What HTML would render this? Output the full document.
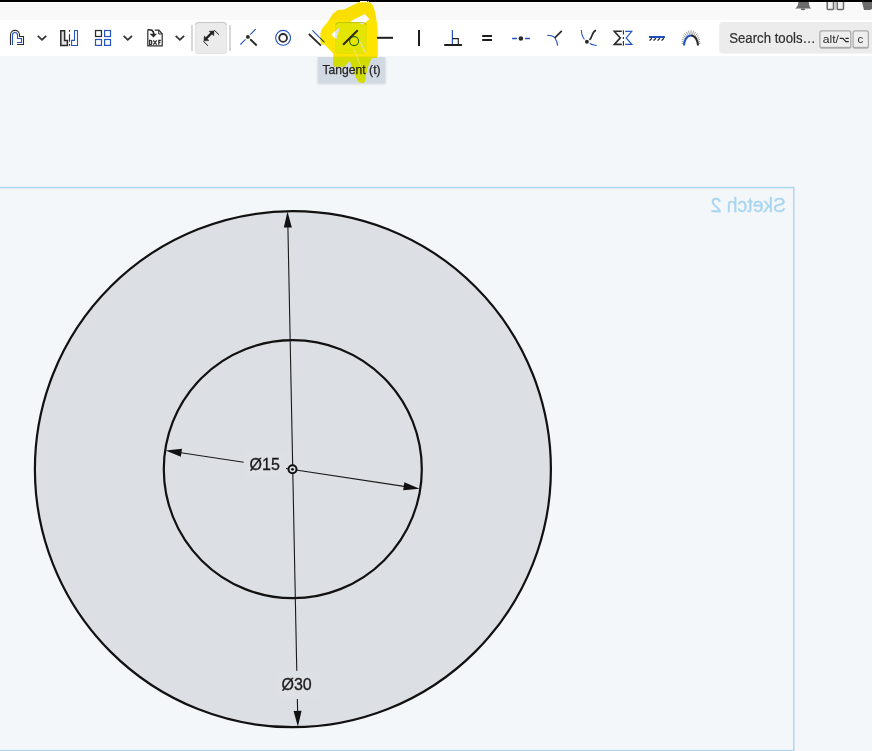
<!DOCTYPE html>
<html><head><meta charset="utf-8">
<style>
html,body{margin:0;padding:0;}
body{width:872px;height:751px;overflow:hidden;position:relative;background:#f3f7fa;font-family:"Liberation Sans",sans-serif;}
.abs{position:absolute;left:0;width:872px;}
svg{position:absolute;left:0;top:0;}
</style></head><body>
<div class="abs" style="top:0;height:2px;background:#000"></div>
<div class="abs" style="top:2px;height:1px;background:#fff"></div>
<div class="abs" style="top:3px;height:17px;background:#f9f9f9"></div>
<div class="abs" style="top:20px;height:36px;background:#fff"></div>
<svg width="872" height="751" viewBox="0 0 872 751" font-family="Liberation Sans, sans-serif" style="will-change:transform">
<!-- ===== CANVAS ===== -->
<g id="canvas">
  <!-- sketch plane rect -->
  <rect x="-10" y="187.6" width="803.8" height="563" fill="none" stroke="#f6f7f9" stroke-width="3.6"/>
  <rect x="-10" y="187.6" width="803.8" height="563" fill="none" stroke="#acd7f1" stroke-width="1.5"/>
  <text x="0" y="0" transform="translate(786,211.5) scale(-1,1)" font-size="19.5" fill="#a9d5f0" stroke="#a9d5f0" stroke-width="0.35" textLength="75.3" lengthAdjust="spacingAndGlyphs">Sketch 2</text>
  <!-- outer disk -->
  <circle cx="292.9" cy="469.2" r="258" fill="#dcdfe4" stroke="#111" stroke-width="2.2"/>
  <circle cx="292.8" cy="469.2" r="129" fill="none" stroke="#111" stroke-width="2.2"/>
  <!-- label boxes -->
  <rect x="244" y="451" width="42" height="27.5" fill="#dde0e4"/>
  <rect x="276" y="671" width="43" height="27.7" fill="#dde0e4"/>
  <!-- dim lines -->
  <g stroke="#1a1a1a" stroke-width="1.1" fill="none">
    <line x1="287.8" y1="222" x2="296.77" y2="670.8"/>
    <line x1="297.34" y1="699" x2="297.7" y2="716"/>
    <line x1="176" y1="452" x2="243.7" y2="462.18"/>
    <line x1="286" y1="468.56" x2="409" y2="487.1"/>
  </g>
  <g fill="#111">
    <polygon points="287.5,211.5 291.82,227.42 283.82,227.58"/>
    <polygon points="297.9,726.8 301.58,710.72 293.58,710.88"/>
    <polygon points="165.6,450.4 180.82,456.74 182.02,448.83"/>
    <polygon points="419.6,488.7 403.18,490.27 404.38,482.35"/>
  </g>
  <circle cx="292.5" cy="469.3" r="4" fill="#dde0e5" stroke="#111" stroke-width="2"/>
  <circle cx="292.5" cy="469.3" r="1.4" fill="#111"/>
  <text x="249.6" y="470" font-size="16" fill="#1a1a1a" stroke="#1a1a1a" stroke-width="0.3">Ø15</text>
  <text x="281.5" y="690" font-size="16" fill="#1a1a1a" stroke="#1a1a1a" stroke-width="0.3">Ø30</text>
</g>

</svg>
<svg width="872" height="751" viewBox="0 0 872 751" font-family="Liberation Sans, sans-serif">
<!-- ===== TOP BAR ICONS ===== -->
<g id="topicons" fill="#6b6b6b">
  <path d="M795,8.6 C797.3,7.4 798.2,5 798.4,2 L808.8,2 C809,5 809.7,7.4 811.2,8.6 Z"/>
  <ellipse cx="803" cy="9.3" rx="2.2" ry="1"/>
  <path d="M827.2,2 V8.6 Q827.2,9.6 828.2,9.6 H832.5 Q833.5,9.6 833.5,8.6 V2" fill="#f2f2f2" stroke="#6b6b6b" stroke-width="1.5"/>
  <path d="M837.2,2 V8.6 Q837.2,9.6 838.2,9.6 H842.5 Q843.5,9.6 843.5,8.6 V2" fill="#f2f2f2" stroke="#6b6b6b" stroke-width="1.5"/><rect x="834.3" y="2" width="2.1" height="8" fill="#c8c8c8"/>
  <path d="M862,2 L872,2 L872,9 L870,10 L864,10 Z"/>
</g>
<!-- ===== TOOLBAR ===== -->
<g id="toolbar" fill="none" stroke-linecap="butt">
  <!-- offset -->
  <path d="M10.5,45 V34.9 A4.5,4.5 0 0 1 19.5,34.9 V36.5 H23.5 V44.5 H17" stroke="#2b2b2b" stroke-width="1.1"/>
  <path d="M12.5,45 V35 A2.5,2.5 0 0 1 17.5,35 V38.5 H21.5 V42.5 H17" stroke="#2455c0" stroke-width="1.1"/>
  <!-- chevrons -->
  <path d="M37.8,35.8 L42,39.8 L46.2,35.8" stroke="#333" stroke-width="1.8"/>
  <path d="M123.6,35.8 L127.8,39.8 L132,35.8" stroke="#333" stroke-width="1.8"/>
  <path d="M175.7,35.8 L179.9,39.8 L184.1,35.8" stroke="#333" stroke-width="1.8"/>
  <!-- mirror -->
  <path d="M60.8,30.8 H64.6 V40.4 H67.4 V45.4 H60.8 Z" fill="#e2e2e2" stroke="#2b2b2b" stroke-width="1.5"/>
  <path d="M69.5,30 V31.8 M69.5,34.2 V41.8 M69.5,43.9 V45.8" stroke="#2b2b2b" stroke-width="1.1"/>
  <path d="M71.6,45.5 V40.4 H74.5 V30.5 H77.5 V45.5 Z" stroke="#2455c0" stroke-width="1.1"/>
  <!-- pattern -->
  <rect x="95.5" y="30.5" width="6" height="6" fill="#e6e6e6" stroke="#2b2b2b" stroke-width="1.2"/>
  <rect x="96.8" y="31.8" width="3.4" height="3.4" fill="#fff"/>
  <rect x="104.6" y="30.5" width="5.9" height="6" stroke="#2455c0" stroke-width="1.2"/>
  <rect x="95.5" y="39.5" width="6" height="5.9" stroke="#2455c0" stroke-width="1.2"/>
  <rect x="104.6" y="39.5" width="5.9" height="5.9" stroke="#2455c0" stroke-width="1.2"/>
  <!-- dxf -->
  <path d="M147.8,30.2 V45.9 H162.2 V33.8 L158.9,30.2 H154.9" stroke="#2b2b2b" stroke-width="1.2"/>
  <path d="M158.7,30.6 V34 H161.9" stroke="#2b2b2b" stroke-width="1"/>
  <path d="M147.6,29.9 C151.5,29.1 153.8,30.8 153.8,34.2" stroke="#2b2b2b" stroke-width="1.6"/>
  <path d="M149.6,33.7 H157 L153.5,37.4 Z" fill="#2b2b2b"/>
  <path d="M149.6,40.4 H150.4 Q151.7,40.4 151.7,41.6 V43.4 Q151.7,44.6 150.4,44.6 H149.6 Z M153.3,40.3 L156.7,44.7 M156.7,40.3 L153.3,44.7 M160.8,40.4 H158.8 V44.8 M158.8,42.4 H160.4" stroke="#2b2b2b" stroke-width="1.25"/>
  <!-- separators -->
  <rect x="191" y="25" width="2" height="26" fill="#d8d8d8"/>
  <rect x="229" y="25" width="2" height="26" fill="#d8d8d8"/>
  <!-- selected dimension button -->
  <rect x="195.4" y="22.3" width="31.2" height="31.4" rx="3" fill="#ebebeb" stroke="#dcdcdc" stroke-width="0.8"/>
  <path d="M195.8,25 Q195.8,22.5 198.4,22.5 H223.6 Q226.2,22.5 226.2,25" stroke="#c8c8c8" stroke-width="1"/>
  <path d="M205.5,39.1 L212.8,31.9" stroke="#222" stroke-width="2.2"/>
  <path d="M204.3,36 L204,40.8 L208.9,40.5 Z" fill="#222" stroke="#222" stroke-width="0.5"/>
  <path d="M209.1,31.2 L214,30.9 L213.7,35.8 Z" fill="#222" stroke="#222" stroke-width="0.5"/>
  <path d="M214.2,30.1 L219.1,34.8 M203.2,41.1 L208,45.8" stroke="#222" stroke-width="1"/>
  <!-- coincident -->
  <path d="M240.3,44.6 L255.7,29.2" stroke="#2455c0" stroke-width="1.1"/>
  <circle cx="247.9" cy="36.9" r="3.2" fill="#fff"/>
  <path d="M250.2,39.3 L256.7,45.5" stroke="#2b2b2b" stroke-width="1.9"/>
  <circle cx="247.9" cy="36.9" r="1.95" fill="#2b2b2b"/>
  <!-- concentric -->
  <circle cx="283.1" cy="37.8" r="7.45" stroke="#2455c0" stroke-width="1.1"/>
  <circle cx="283.1" cy="37.9" r="3.9" stroke="#2b2b2b" stroke-width="1.8"/>
  <!-- parallel -->
  <path d="M308.8,34 L321,45.7" stroke="#2b2b2b" stroke-width="1.8"/>
  <path d="M312.4,30.3 L324.5,42.4" stroke="#2455c0" stroke-width="1.1"/>
  <!-- hovered tangent button -->
  <rect x="335.2" y="22.2" width="31.3" height="31.4" rx="3" fill="#e2e2ea"/>
  <!-- horizontal -->
  <path d="M377,37.8 H393" stroke="#1e1e1e" stroke-width="2"/>
  <!-- vertical -->
  <path d="M419,30 V45.9" stroke="#1e1e1e" stroke-width="2"/>
  <!-- perpendicular -->
  <path d="M444.2,45 H461.9" stroke="#1e1e1e" stroke-width="2"/>
  <path d="M452.4,30 V44" stroke="#2455c0" stroke-width="1.2"/>
  <path d="M452.4,38.6 H458.3 V44" stroke="#1e1e1e" stroke-width="1.1"/>
  <!-- equal -->
  <path d="M482.2,35.9 H492 M482.2,39.9 H492" stroke="#1e1e1e" stroke-width="2"/>
  <!-- midpoint -->
  <path d="M512.1,38.5 H516.9 M525.1,38.5 H529.9" stroke="#2455c0" stroke-width="1.3"/>
  <circle cx="520.9" cy="38.5" r="2.3" fill="#2b2b2b"/>
  <!-- normal -->
  <path d="M547.1,35.3 Q553.5,35.5 555,38 Q557.5,42 557.6,45.7" stroke="#2455c0" stroke-width="1.1"/>
  <path d="M554.8,37.9 L561.8,30.8" stroke="#2b2b2b" stroke-width="1.7"/>
  <!-- curvature -->
  <path d="M581.3,30 Q581.6,38 587,41.8 Q591,45 596.8,45.5" stroke="#2455c0" stroke-width="1.1"/>
  <circle cx="586.9" cy="41.7" r="3.3" fill="#fff"/>
  <path d="M589.5,39.9 Q591,38.5 592,35.5 Q593.3,31.5 596,30.3" stroke="#2b2b2b" stroke-width="1.7"/>
  <circle cx="586.9" cy="41.7" r="1.95" fill="#2b2b2b"/>
  <!-- symmetric -->
  <path d="M621.8,31.3 H614.3 L620.3,37.9 L614.3,44.4 H621.8" stroke="#2b2b2b" stroke-width="1.6"/>
  <path d="M623.4,30.2 V34.6 M623.4,37 V38.9 M623.4,41.1 V45.8" stroke="#2b2b2b" stroke-width="1.1"/>
  <path d="M625.2,31.4 H631.8 L626.2,37.9 L631.8,44.4 H625.2" stroke="#2455c0" stroke-width="1.2"/>
  <!-- fix -->
  <path d="M649,37 H664.9" stroke="#2050bf" stroke-width="2"/>
  <path d="M649.5,40.6 L651.9,38.2 M653.5,40.6 L655.9,38.2 M657.5,40.6 L659.9,38.2 M661.5,40.6 L663.9,38.2" stroke="#2b2b2b" stroke-width="1.3"/>
  <!-- curvature comb -->
  <path stroke="#8a8a8a" stroke-width="0.85" d="M682.9,43.6 L681.7,43.5 M683.3,41.8 L681.9,41.5 M683.8,40.1 L682.1,39.4 M684.6,38.5 L682.6,37.3 M685.6,37.1 L683.4,35.3 M686.7,36.0 L684.6,33.4 M688.1,35.1 L686.3,31.8 M689.5,34.6 L688.5,30.7 M691.0,34.4 L691.0,30.3 M692.5,34.6 L693.5,30.7 M693.9,35.1 L695.7,31.8 M695.3,36.0 L697.4,33.4 M696.4,37.1 L698.6,35.3 M697.4,38.5 L699.4,37.3 M698.2,40.1 L699.9,39.4 M698.7,41.8 L700.1,41.5 M699.1,43.6 L700.3,43.5"/>
  <path d="M684,45.6 C684,41 686.5,35.6 691,35.6" stroke="#2455c0" stroke-width="2"/>
  <path d="M691,35.6 C695.5,35.6 698,41 698,45.6" stroke="#2b2b2b" stroke-width="2"/>
  <!-- search box -->
  <rect x="719.2" y="22" width="160" height="31.5" rx="4" fill="#ececec"/>
  <text x="729.2" y="42.5" font-size="14.8" fill="#2e2e2e" stroke="#2e2e2e" stroke-width="0.2" textLength="86.5" lengthAdjust="spacingAndGlyphs">Search tools…</text>
  <rect x="819.9" y="30.9" width="30.9" height="17" rx="2" fill="#eeeeee" stroke="#a8a8a8" stroke-width="1.2"/>
  <path d="M820.6,47.6 H850.2" stroke="#a8a8a8" stroke-width="1.5"/>
  <text x="822.8" y="43" font-size="11" fill="#2a2a2a" stroke="none" textLength="16.2" lengthAdjust="spacingAndGlyphs">alt/</text>
  <path d="M839.7,38.4 H842.9 L845.9,41.6 H848.8 M845.4,38.4 H848.8" stroke="#2a2a2a" stroke-width="1.2"/>
  <rect x="853.1" y="30.9" width="15.3" height="17" rx="2" fill="#eeeeee" stroke="#a8a8a8" stroke-width="1.2"/>
  <path d="M853.8,47.6 H867.7" stroke="#a8a8a8" stroke-width="1.5"/>
  <text x="857.6" y="43" font-size="11.5" fill="#2a2a2a" stroke="none">c</text>
</g>
<!-- ===== TOOLTIP ===== -->
<g id="tooltip">
  <filter id="tblur" x="-20%" y="-20%" width="140%" height="160%"><feGaussianBlur stdDeviation="1"/></filter>
  <rect x="317.6" y="58" width="67.9" height="26.2" fill="#000" opacity="0.13" filter="url(#tblur)"/>
  <rect x="318.1" y="57" width="66.9" height="26.2" fill="#d1dae3"/>
</g>

<!-- ===== YELLOW SCRIBBLE ===== -->
<defs>
  <path id="scr" fill-rule="evenodd" d="M358.6,2.2 L369.6,2.2 L372.7,5 L375.1,12 L376.7,21 L377.6,30 L377.8,45 L377.7,56.2 L376.6,57.8 L371.3,58.3 L370.2,61 L368.1,66.3 L366,74.3 L364.9,81.8 L362.8,82.9 L358.5,81.8 L354.8,74.8 L351.6,65.2 L349.7,60.5 L344.6,66.5 L333.5,66.5 L333.5,57 L333,53.3 L325,45 L321,44 L320.4,41.9 L320.4,33.5 L321.6,29.3 L327,22.8 L333,13.8 L337.8,9.9 L344.3,9.6 L350,6.5 Z
   M331.2,34.4 L340.3,26.4 L336.5,39.8 Z
   M350.5,21.3 L364.8,14.1 L369.5,19.2 L361.8,25.1 L358.5,22.6 L351,22.6 Z"/>
  <clipPath id="cBtn"><rect x="335.2" y="22.2" width="31.3" height="31.4" rx="3"/></clipPath>
  <clipPath id="cTip"><rect x="318.1" y="57" width="66.9" height="26.2"/></clipPath>
</defs>
<use href="#scr" fill="#ffe400" style="mix-blend-mode:multiply"/>
<use href="#scr" fill="#e4e600" clip-path="url(#cBtn)"/>
<use href="#scr" fill="#d3dc00" clip-path="url(#cTip)"/>
<g clip-path="url(#cBtn)">
  <path d="M335.8,25 Q335.8,22.6 338.3,22.6 H363.6 Q366.1,22.6 366.1,25" stroke="#b8ba00" stroke-width="1" fill="none"/>
  <circle cx="354.1" cy="41.1" r="4.5" stroke="#2a6a10" stroke-width="1.1" fill="none"/>
  <path d="M343.1,44.8 L357.7,30.3" stroke="#2a2a00" stroke-width="2"/>
  <path d="M360.3,42.2 L365.3,52.7" stroke="#e6e6ee" stroke-width="0.9"/>
</g>
<path d="M354.3,49.8 L360.7,66.3" stroke="#e8ecb0" stroke-width="0.6"/>
<rect x="360" y="1" width="7" height="1" fill="#fff"/><rect x="367.6" y="1" width="1.2" height="1" fill="#ddd"/>


<text x="322.4" y="73.8" font-size="13.4" fill="#222" stroke="#222" stroke-width="0.25" textLength="58.2" lengthAdjust="spacingAndGlyphs">Tangent (t)</text>
</svg>
</body></html>
